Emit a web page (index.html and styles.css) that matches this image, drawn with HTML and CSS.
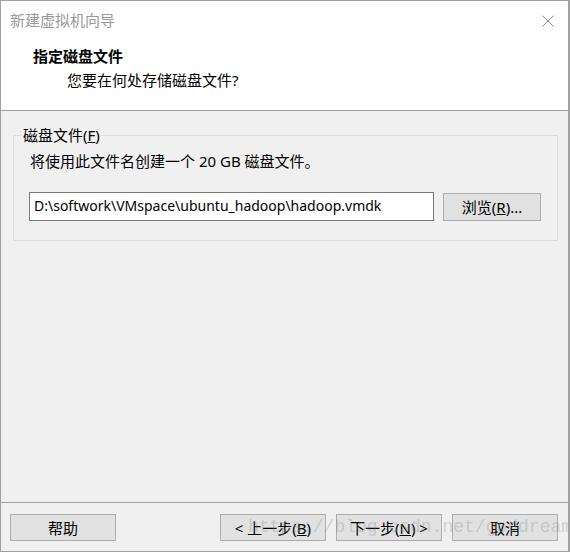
FILE: index.html
```html
<!DOCTYPE html>
<html lang="zh-CN">
<head>
<meta charset="utf-8">
<title>新建虚拟机向导</title>
<link rel="stylesheet" href="styles.css">
</head>
<body>
<div class="window">
  <div class="header">
    <div class="titlebar">
      <span class="title">新建虚拟机向导</span>
      <svg class="close" width="12" height="12" viewBox="0 0 12 12"><path d="M0.5 0.5L11.5 11.5M11.5 0.5L0.5 11.5" stroke="#8a8a8a" stroke-width="1" fill="none"/></svg>
    </div>
    <div class="heading">指定磁盘文件</div>
    <div class="subheading">您要在何处存储磁盘文件?</div>
  </div>
  <div class="content">
    <fieldset class="group">
      <legend class="legend">磁盘文件(<u>F</u>)</legend>
      <div class="desc">将使用此文件名创建一个 20 GB 磁盘文件。</div>
      <div class="pathrow">
        <div class="input">D:\softwork\VMspace\ubuntu_hadoop\hadoop.vmdk</div>
        <div class="btn browse">浏览(<u>R</u>)...</div>
      </div>
    </fieldset>
  </div>
  <div class="footer">
    <div class="btn">帮助</div>
    <div class="spacer"></div>
    <div class="btn">&lt; 上一步(<u>B</u>)</div>
    <div class="btn gap">下一步(<u>N</u>) &gt;</div>
    <div class="btn gap">取消</div>
  </div>
  <div class="watermark">https://blog.csdn.net/goddream</div>
</div>
</body>
</html>
```
FILE: styles.css
```css
* { box-sizing: border-box; }
html, body { margin: 0; padding: 0; background: #ffffff; }
body {
  font-family: "Segoe UI", "Noto Sans", "Noto Sans CJK SC", sans-serif;
  font-size: 15px;
  line-height: 20px;
  color: #000;
}
.window {
  position: relative;
  width: 570px;
  height: 552px;
  border: 1px solid #a0a0a0;
  border-right-width: 2px;
  display: flex;
  flex-direction: column;
  background: #f0f0f0;
  overflow: hidden;
}
.header {
  height: 110px;
  background: #fff;
  border-bottom: 1px solid #a0a0a0;
  flex: none;
}
.titlebar {
  display: flex;
  align-items: center;
  justify-content: space-between;
  padding: 9px 14px 0 9px;
  height: 29px;
}
.title { color: #999; }
.close { display: block; margin-top: 1px; }
.heading {
  font-weight: bold;
  font-size: 15px;
  padding-left: 32px;
  margin-top: 16px;
}
.subheading {
  padding-left: 66px;
  margin-top: 4px;
}
.content {
  flex: 1;
  padding: 14px 10px 0 12px;
}
.group {
  margin: 0;
  border: 1px solid #dcdcdc;
  padding: 0 16px 19px 15px;
  min-width: 0;
}
.legend {
  padding: 0 1px;
  margin-left: -7px;
}
.desc {
  padding-left: 1px;
  margin-top: 6px;
}
.pathrow {
  display: flex;
  align-items: center;
  gap: 9px;
  margin-top: 21px;
}
.input {
  flex: 1;
  height: 29px;
  background: #fff;
  border: 1px solid #7a7a7a;
  padding: 3px 4px 0 4px;
  font-size: 14px;
  white-space: nowrap;
}
.btn {
  height: 27px;
  width: 106px;
  background: #e1e1e1;
  border: 1px solid #adadad;
  display: flex;
  align-items: center;
  justify-content: center;
  white-space: nowrap;
  flex: none;
}
.browse {
  width: 98px;
  height: 28px;
}
.footer {
  height: 49px;
  flex: none;
  border-top: 1px solid #a0a0a0;
  display: flex;
  align-items: flex-start;
  padding: 11px 10px 0 9px;
}
.spacer { flex: 1; }
.gap { margin-left: 10px; }
.watermark {
  position: absolute;
  left: 247px;
  top: 514px;
  font-family: "Liberation Mono", monospace;
  font-size: 18px;
  line-height: 24px;
  color: rgba(130, 130, 130, 0.3);
  white-space: nowrap;
  pointer-events: none;
}
```
